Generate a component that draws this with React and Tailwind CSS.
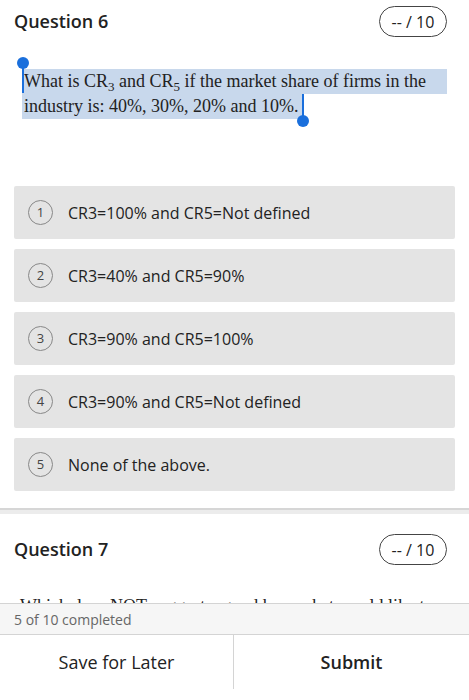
import React from "react";

const options = [
  "CR3=100% and CR5=Not defined",
  "CR3=40% and CR5=90%",
  "CR3=90% and CR5=100%",
  "CR3=90% and CR5=Not defined",
  "None of the above.",
];

function Pill() {
  return (
    <div className="h-[31px] w-[68px] rounded-full border border-[#444] flex items-center justify-center text-[16px] text-[#222]">
      -- / 10
    </div>
  );
}

function Sub({ children }) {
  return <span className="relative top-[4px] text-[13px]">{children}</span>;
}

export default function App() {
  return (
    <div className="relative w-[469px] h-[700px] overflow-hidden bg-white text-[#222]" style={{ fontFamily: '"Open Sans", sans-serif' }}>
      <div className="px-[14px] pt-[6px]">
        <div className="flex items-center justify-between pr-[8px]">
          <h2 className="text-[18px] font-semibold text-[#222]">Question 6</h2>
          <Pill />
        </div>
        <div className="relative mt-[32px] ml-[8px] text-[18px] leading-[25px] text-[#222]" style={{ fontFamily: '"Liberation Serif", serif' }}>
          <div className="w-[425px] h-[25px] bg-[#c8d8ec] pl-[2px] whitespace-nowrap">
            What is CR<Sub>3</Sub> and CR<Sub>5</Sub> if the market share of firms in the
          </div>
          <div className="flex h-[25px]">
            <span className="bg-[#c8d8ec] pl-[2px] pr-[4px] whitespace-nowrap">industry is: 40%, 30%, 20% and 10%.</span>
            <span className="relative w-[2px] h-[25px] bg-[#1a6fdc]">
              <span className="absolute left-[-5px] top-[21px] w-[12px] h-[12px] rounded-full bg-[#1a6fdc]" />
            </span>
          </div>
          <span className="absolute left-[0px] top-[-6px] w-[2px] h-[30px] bg-[#1a6fdc]" />
          <span className="absolute left-[-5px] top-[-12px] w-[12px] h-[12px] rounded-full bg-[#1a6fdc]" />
        </div>
        <div className="mt-[67px] flex flex-col gap-[10px]">
          {options.map((o, i) => (
            <div key={i} className="h-[53px] bg-[#e4e4e4] flex items-center pl-[14px] rounded-[2px]">
              <div className="w-[25px] h-[25px] rounded-full border border-[#888] flex items-center justify-center text-[13px] text-[#444]">
                {i + 1}
              </div>
              <span className="ml-[15px] text-[16px] text-[#222]">{o}</span>
            </div>
          ))}
        </div>
      </div>
      <div className="mt-[17px] border-t-2 border-[#d6d6d6] h-[6px] bg-[#ececec]" />
      <div className="px-[14px] pt-[20px]">
        <div className="flex items-center justify-between pr-[8px]">
          <h2 className="text-[18px] font-semibold text-[#222]">Question 7</h2>
          <Pill />
        </div>
        <p className="mt-[29px] ml-[6px] text-[18px] leading-[25px] text-[#222] whitespace-nowrap" style={{ fontFamily: '"Liberation Serif", serif' }}>
          Which does NOT suggest a good he market would like to
        </p>
      </div>
      <div className="absolute left-0 right-0 bottom-0 h-[97px] bg-white">
        <div className="h-[32px] bg-[#f6f6f6] border-t border-b border-[#d4d4d4] flex items-center px-[14px] text-[14px] text-[#666]">
          5 of 10 completed
        </div>
        <div className="flex h-[54px]">
          <div className="w-[234px] flex items-center justify-center text-[18px] text-[#222] border-r border-[#d4d4d4]">
            Save for Later
          </div>
          <div className="flex-1 flex items-center justify-center text-[18px] font-semibold text-[#222]">
            Submit
          </div>
        </div>
      </div>
    </div>
  );
}
